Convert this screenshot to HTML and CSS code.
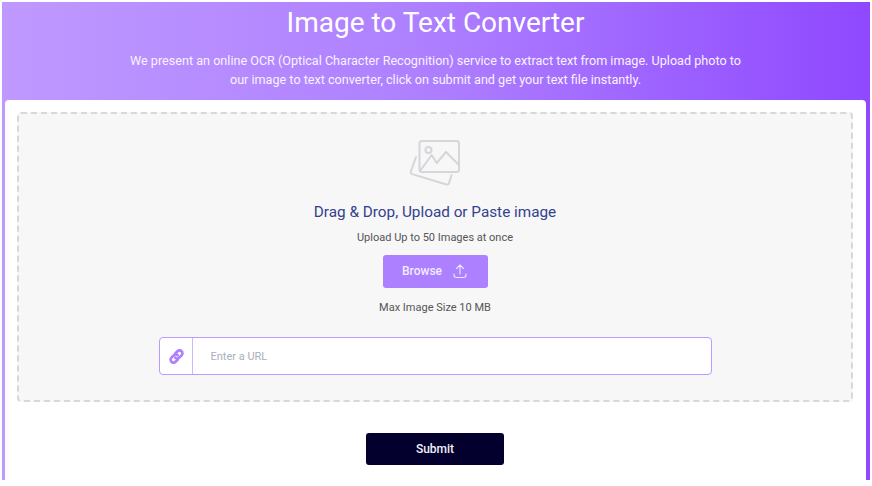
FILE: index.html
```html
<!DOCTYPE html>
<html lang="en">
<head>
<meta charset="utf-8">
<title>Image to Text Converter</title>
<link rel="stylesheet" href="styles.css">
</head>
<body>
<main class="frame">
  <header class="hero">
    <h1 class="title">Image to Text Converter</h1>
    <p class="lead">We present an online OCR (Optical Character Recognition) service to extract text from image. Upload photo to our image to text converter, click on submit and get your text file instantly.</p>
  </header>
  <section class="card">
    <div class="drop">
      <svg class="photo" width="52" height="48" viewBox="0 0 52 48" fill="none" stroke="#d6d6da" stroke-width="2" stroke-linejoin="round" stroke-linecap="round">
        <rect x="11.500" y="2" width="39.500" height="31" rx="2.500"/>
        <circle cx="20.500" cy="11" r="3"/>
        <path d="M12 32 23.700 16l5 8L38 13l13 13"/>
        <path d="M8 18 2.800 32.500a2 2 0 0 0 1.400 2.600l34.300 10.400a2 2 0 0 0 2.500-1.400L43.500 36"/>
      </svg>
      <h2 class="drop-title">Drag &amp; Drop, Upload or Paste image</h2>
      <p class="note note-top">Upload Up to 50 Images at once</p>
      <button class="browse" type="button">Browse
        <svg width="16" height="16" viewBox="0 0 16 16" fill="none" stroke="#f0e6ff" stroke-width="1.100" stroke-linecap="round" stroke-linejoin="round">
          <path d="M8 11V2M4.500 5.500 8 2l3.500 3.500"/>
          <path d="M2 11v1a2.500 2.500 0 0 0 2.500 2.500h7A2.500 2.500 0 0 0 14 12v-1"/>
        </svg>
      </button>
      <p class="note note-max">Max Image Size 10 MB</p>
      <div class="url">
        <span class="url-icon">
          <svg class="link" width="17" height="17" viewBox="0 0 16 16" fill="none" stroke="#ac7fff" stroke-width="2.500" stroke-linecap="round">
            <path d="M6.800 5.200 8.900 3.100a2.700 2.700 0 0 1 3.900 3.800l-2.200 2.200a2.700 2.700 0 0 1-3.800 0"/>
            <path d="M9.200 10.800 7.100 12.900a2.700 2.700 0 0 1-3.900-3.800l2.200-2.200a2.700 2.700 0 0 1 3.800 0"/>
          </svg>
        </span>
        <input class="url-input" type="text" placeholder="Enter a URL">
      </div>
    </div>
    <div class="actions">
      <button class="submit" type="button">Submit</button>
    </div>
  </section>
</main>
</body>
</html>
```
FILE: styles.css
```css
* { box-sizing: border-box; }
html, body { margin: 0; height: 100%; background: #fff; overflow: hidden; }
body { padding: 2px 2px 6px; font-family: Roboto, "Liberation Sans", sans-serif; }
.frame {
  height: 478px;
  padding: 0 4px 0 3px;
  display: flex;
  flex-direction: column;
  background: linear-gradient(90deg, #bf99ff 0%, #ad7fff 50%, #8f48ff 100%);
}
.hero { height: 98px; text-align: center; color: #fff; padding-top: 5px; }
.title { margin: 0; font-size: 28px; line-height: 32px; font-weight: 400; }
.lead {
  margin: 12px auto 0;
  width: 625px;
  font-size: 12.620px;
  line-height: 19px;
  color: #f8f3ff;
}
.card {
  flex: 1;
  background: #fff;
  border-radius: 4px 4px 0 0;
  padding: 12px 13px 0 12px;
}
.drop {
  height: 290px;
  background: #f7f7f7;
  border: 2px dashed #d8d8d8;
  border-radius: 4px;
  display: flex;
  flex-direction: column;
  align-items: center;
  padding-top: 25px;
}
.photo { display: block; margin-right: 2px; }
.drop-title {
  margin: 15px 0 0;
  font-size: 15.300px;
  line-height: 20px;
  font-weight: 400;
  color: #33418f;
}
.note { margin: 0; font-size: 11px; line-height: 14px; color: #555; }
.note-top { margin-top: 9px; }
.browse {
  margin-top: 10px;
  width: 105px;
  height: 33px;
  border: 0;
  border-radius: 3px;
  padding: 0 0 2px;
  background: #ac80ff;
  color: #f3ebff;
  font: 500 12px/30px Roboto, sans-serif;
  display: flex;
  align-items: center;
  justify-content: center;
  gap: 10px;
}
.note-max { margin-top: 13px; }
.url {
  margin-top: 22px;
  width: 553px;
  height: 38px;
  display: flex;
  background: #fff;
  border: 1px solid #bb9bff;
  border-radius: 4px;
}
.url-icon {
  width: 33px;
  padding-left: 1px;
  display: flex;
  align-items: center;
  justify-content: center;
  border-right: 1px solid #cdb5ff;
}
.url-input {
  flex: 1;
  min-width: 0;
  border: 0;
  outline: 0;
  background: transparent;
  padding: 0 18px;
  font: 11px Roboto, sans-serif;
  border-radius: 4px;
}
.url-input::placeholder { color: #a9afba; opacity: 1; }
.actions { display: flex; justify-content: center; padding-top: 31px; }
.submit {
  width: 138px;
  height: 32px;
  border: 0;
  border-radius: 3px;
  background: #03002e;
  color: #f2f0fa;
  font: 500 12px Roboto, sans-serif;
}
```
